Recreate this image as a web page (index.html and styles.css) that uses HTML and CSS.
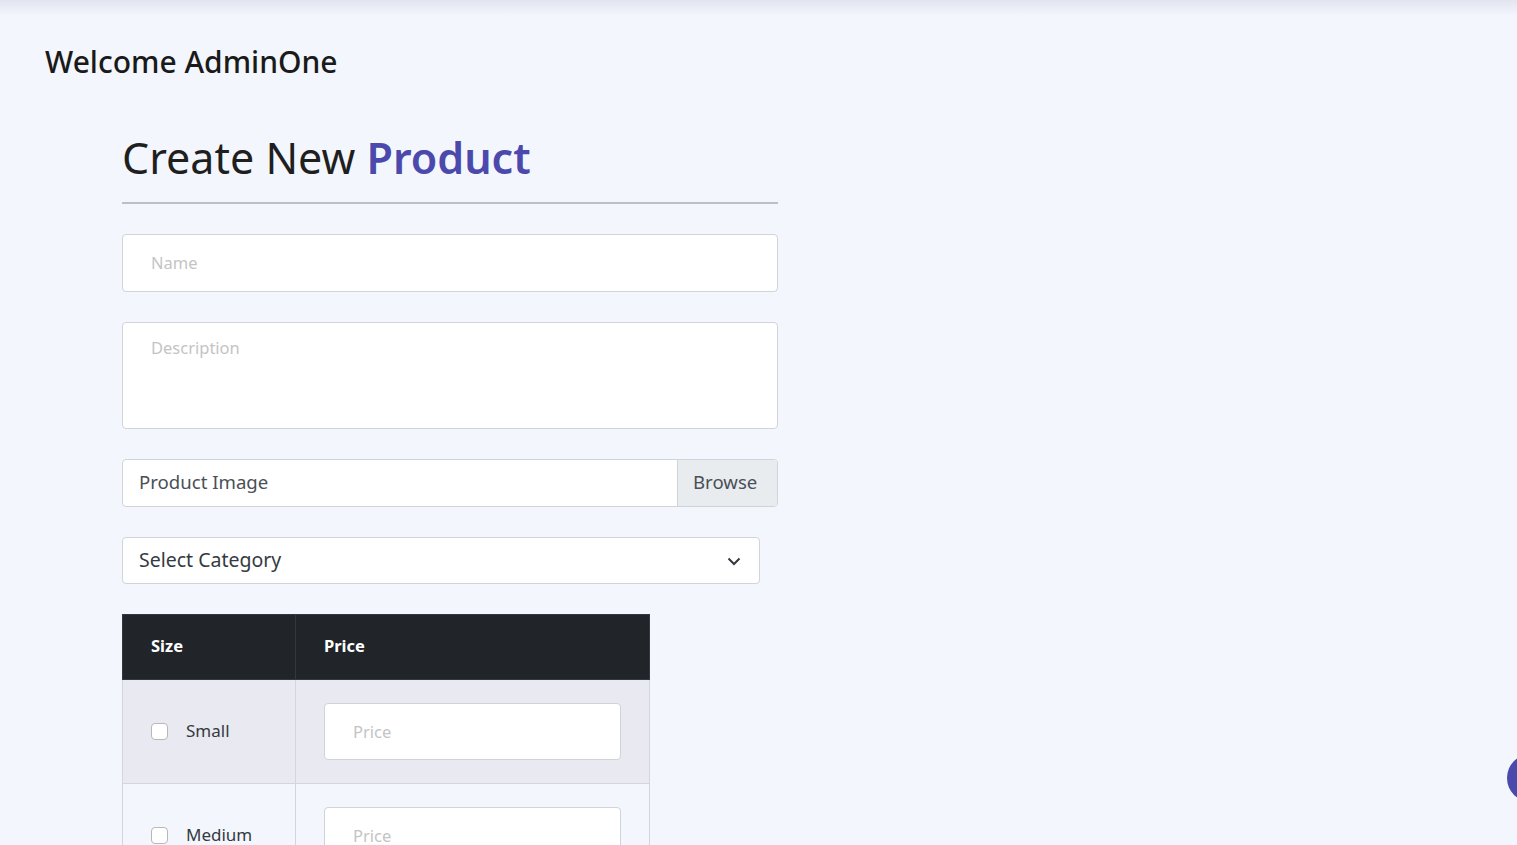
FILE: index.html
```html
<!DOCTYPE html>
<html lang="en">
<head>
<meta charset="utf-8">
<title>Create New Product</title>
<link rel="stylesheet" href="styles.css">
</head>
<body>
<div class="topshadow"></div>
<div class="page">
  <h2 class="welcome">Welcome AdminOne</h2>
  <form class="product-form">
    <h1 class="title">Create New <span class="accent">Product</span></h1>
    <hr class="rule">
    <input class="field" type="text" placeholder="Name">
    <textarea class="field area" placeholder="Description"></textarea>
    <div class="file">
      <span class="file-label">Product Image</span>
      <span class="file-btn">Browse</span>
    </div>
    <div class="select">
      <span>Select Category</span>
      <svg class="chev" width="14" height="10" viewBox="0 0 14 10"><path d="M1.5 2.5 L7 8 L12.5 2.5" fill="none" stroke="#343a40" stroke-width="2"/></svg>
    </div>
    <table class="sizes">
      <thead>
        <tr><th class="c1">Size</th><th class="c2">Price</th></tr>
      </thead>
      <tbody>
        <tr class="odd">
          <td class="c1"><label class="check"><span class="box"></span>Small</label></td>
          <td class="c2"><input class="price" type="text" placeholder="Price"></td>
        </tr>
        <tr>
          <td class="c1"><label class="check"><span class="box"></span>Medium</label></td>
          <td class="c2"><input class="price" type="text" placeholder="Price"></td>
        </tr>
      </tbody>
    </table>
  </form>
</div>
<div class="bubble"></div>
</body>
</html>
```
FILE: styles.css
```css
* { box-sizing: border-box; }
html, body { margin: 0; padding: 0; overflow: hidden; }
body {
  background: #f3f6fd;
  font-family: "Noto Sans", "Open Sans", sans-serif;
  color: #1f1f1f;
  height: 845px;
}
.topshadow {
  height: 16px;
  background: linear-gradient(#e2e5ee, #f3f6fd);
}
.page { padding: 0 0 0 45px; }
.welcome {
  margin: 26px 0 0 0;
  font-size: 30px;
  font-weight: 500;
  line-height: 40px;
  color: #1a1a1a;
}
.product-form {
  margin: 47px 0 0 77px;
  width: 656px;
}
.title {
  margin: 0;
  font-size: 43px;
  font-weight: 400;
  line-height: 58px;
  color: #1f1f1f;
}
.accent { color: #4b49ac; font-weight: 600; }
.rule {
  margin: 15px 0 30px 0;
  border: 0;
  height: 2px;
  background: #bdbfc4;
}
.field {
  display: block;
  width: 656px;
  height: 58px;
  margin: 0 0 30px 0;
  padding: 0 28px 2px;
  border: 1px solid #ced4da;
  border-radius: 4px;
  background: #fff;
  font-family: "Noto Sans", sans-serif;
  font-size: 16.5px;
  color: #495057;
  outline: none;
}
.field::placeholder, .price::placeholder { color: #c4c4c4; }
.area {
  height: 107px;
  padding: 13px 28px;
  resize: none;
}
.file {
  display: flex;
  width: 656px;
  height: 48px;
  margin-bottom: 30px;
  border: 1px solid #ced4da;
  border-radius: 4px;
  background: #fff;
  overflow: hidden;
  font-family: "Noto Sans", sans-serif;
  font-size: 18.6px;
  color: #495057;
}
.file-label {
  flex: 1;
  padding: 0 16px;
  line-height: 44px;
}
.file-btn {
  width: 100px;
  padding: 0 15px;
  line-height: 44px;
  background: #e9ecef;
  border-left: 1px solid #ced4da;
}
.select {
  display: flex;
  align-items: center;
  justify-content: space-between;
  width: 638px;
  height: 47px;
  margin-bottom: 30px;
  padding: 0 18px 3px 16px;
  border: 1px solid #ced4da;
  border-radius: 4px;
  background: #fff;
  font-family: "Noto Sans", sans-serif;
  font-size: 19.5px;
  color: #343a40;
}
.chev { margin-top: 3px; }
.sizes {
  border-collapse: collapse;
  width: 528px;
  font-size: 16px;
}
.sizes th {
  background: #212529;
  color: #fff;
  text-align: left;
  font-weight: 700;
  height: 65px;
  padding: 0 28px 3px;
  border: 1px solid #32383e;
  font-size: 16.5px;
}
.sizes .c1 { width: 173px; }
.sizes td {
  border: 1px solid #d4d6de;
  padding: 23px 28px;
  vertical-align: middle;
}
.sizes tr.odd td { background: #e9e9f1; }
.check {
  display: flex;
  align-items: center;
  gap: 18px;
  color: #343a40;
  font-size: 17px;
  margin-top: -3px;
}
.box {
  width: 17px;
  height: 17px;
  border: 1px solid #b8b8b8;
  border-radius: 4px;
  background: #fff;
  margin-top: 3px;
}
.price {
  display: block;
  width: 297px;
  height: 57px;
  padding: 0 28px;
  border: 1px solid #ced4da;
  border-radius: 4px;
  background: #fff;
  font-family: "Noto Sans", sans-serif;
  font-size: 16.5px;
  outline: none;
}
.bubble {
  position: fixed;
  left: 1507px;
  top: 754px;
  width: 48px;
  height: 48px;
  border-radius: 50%;
  background: #4b49ac;
}
```
